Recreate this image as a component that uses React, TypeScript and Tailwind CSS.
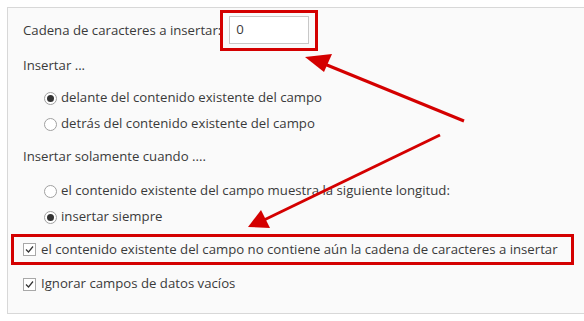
import React from 'react'

function Radio({ checked }: { checked?: boolean }) {
  return (
    <span className="w-[13px] h-[13px] rounded-full border border-[#a0a0a0] bg-white flex items-center justify-center shrink-0">
      {checked && <span className="w-[7px] h-[7px] rounded-full bg-[#333]" />}
    </span>
  )
}

function Check() {
  return (
    <span className="w-[13px] h-[13px] border border-[#a8a8a8] bg-white flex items-center justify-center shrink-0">
      <svg width="9" height="9" viewBox="0 0 9 9" fill="none">
        <path d="M1 4.5 L3.5 7 L8 1.5" stroke="#333" strokeWidth="1.2" />
      </svg>
    </span>
  )
}

export default function App() {
  return (
    <div
      className="relative w-[584px] h-[321px] overflow-hidden bg-white text-[#3a3a3a] text-[13.2px]"
      style={{ fontFamily: '"Open Sans", "Liberation Sans", sans-serif' }}
    >
      <div className="ml-[7px] mt-[7px] w-[600px] h-[307px] border border-[#d8d8d8] bg-[#fafafa] pl-[15px] pt-[2px]">
        <div className="flex items-center h-[41px]">
          <span>Cadena de caracteres a insertar:</span>
          <div className="-ml-[1px] border-[3px] border-[#d40000] pl-[6px] pr-[6px] pt-[3px] pb-[4px]">
            <div className="w-[80px] h-[28px] border border-[#c8c8c8] bg-white flex items-center pl-[6px]">0</div>
          </div>
        </div>
        <div className="mt-[3px] h-[24px] flex items-center">Insertar ...</div>
        <div className="mt-[7px] pl-[21px]">
          <div className="h-[26px] flex items-center gap-[4px]">
            <Radio checked />
            <span>delante del contenido existente del campo</span>
          </div>
          <div className="h-[26px] flex items-center gap-[4px]">
            <Radio />
            <span>detrás del contenido existente del campo</span>
          </div>
        </div>
        <div className="mt-[8px] h-[24px] flex items-center">Insertar solamente cuando ....</div>
        <div className="mt-[9px] pl-[21px]">
          <div className="h-[26px] flex items-center gap-[4px]">
            <Radio />
            <span>el contenido existente del campo muestra la siguiente longitud:</span>
          </div>
          <div className="h-[26px] flex items-center gap-[4px]">
            <Radio checked />
            <span>insertar siempre</span>
          </div>
        </div>
        <div className="mt-[4px] -ml-[12px] w-[563px] h-[31px] border-[3px] border-[#d40000] pl-[9px] flex items-center gap-[5px]">
          <Check />
          <span>el contenido existente del campo no contiene aún la cadena de caracteres a insertar</span>
        </div>
        <div className="mt-[7px] h-[24px] flex items-center gap-[5px]">
          <Check />
          <span>Ignorar campos de datos vacíos</span>
        </div>
      </div>

      <svg className="absolute inset-0 pointer-events-none" width="584" height="321">
        <line x1="464" y1="121" x2="322" y2="63" stroke="#d40000" strokeWidth="3" />
        <polygon points="305,57 332,54 324,72" fill="#d40000" />
        <line x1="440" y1="135" x2="264" y2="220" stroke="#d40000" strokeWidth="3" />
        <polygon points="248,227 261,210 270,228" fill="#d40000" />
      </svg>
    </div>
  )
}
